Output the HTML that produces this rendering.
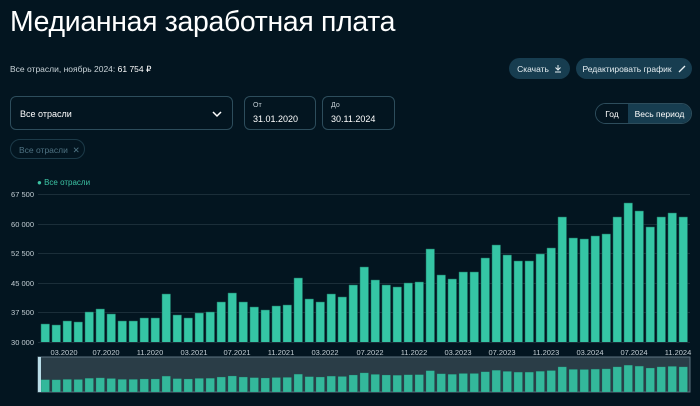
<!DOCTYPE html>
<html><head><meta charset="utf-8"><style>
*{margin:0;padding:0;box-sizing:border-box}
html,body{width:700px;height:406px;overflow:hidden}
body{background:#031520;font-family:"Liberation Sans",sans-serif;color:#fff;position:relative}
.a{position:absolute}
h1{position:absolute;left:10px;top:6px;font-size:28.4px;font-weight:400;letter-spacing:-0.3px}
.sub{left:10px;top:64px;font-size:8.5px;color:#c9d3d8}
.btn{position:absolute;top:58px;height:21px;border-radius:11px;background:#173d50;font-size:8.5px;color:#e6eef2;display:flex;align-items:center;justify-content:center}
.box{position:absolute;border:1px solid #2d4d5c;border-radius:6px}
.lbl{font-size:7px;color:#c3ced4}
.val{font-size:9px;color:#fff}
</style></head><body>
<h1>Медианная заработная плата</h1>
<div class="a sub">Все отрасли, ноябрь 2024: <span style="color:#fff">61 754 ₽</span></div>
<div class="btn" style="left:509px;width:61px">Скачать<svg style="margin-left:5px" width="8" height="9"><path d="M4 1v5M1.5 3.5L4 6l2.5-2.5M1 8h6" stroke="#e6eef2" stroke-width="1" fill="none"/></svg></div>
<div class="btn" style="left:576px;width:116px">Редактировать график<svg style="margin-left:6px" width="8" height="8"><path d="M1 7L7 1" stroke="#e6eef2" stroke-width="1.3"/></svg></div>
<div class="box" style="left:10px;top:96px;width:223px;height:34px"><span class="a val" style="left:9px;top:12px">Все отрасли</span>
<svg class="a" style="left:201px;top:13px" width="10" height="8"><path d="M1 2l4 4 4-4" stroke="#fff" stroke-width="1.5" fill="none"/></svg></div>
<div class="box" style="left:244px;top:96px;width:72px;height:34px"><span class="a lbl" style="left:8px;top:5px">От</span><span class="a val" style="left:8px;top:17px">31.01.2020</span></div>
<div class="box" style="left:322px;top:96px;width:73px;height:34px"><span class="a lbl" style="left:8px;top:5px">До</span><span class="a val" style="left:8px;top:17px">30.11.2024</span></div>
<div class="box" style="left:595px;top:103px;width:97px;height:21px;border-radius:11px;overflow:hidden;display:flex;font-size:8.5px">
<div style="width:32px;display:flex;align-items:center;justify-content:center;background:#031520">Год</div>
<div style="flex:1;display:flex;align-items:center;justify-content:center;background:#173d50">Весь период</div></div>
<div class="box" style="left:10px;top:139px;width:75px;height:20px;border-radius:10px;border-color:#1c3a48;font-size:8.5px;color:#4f7383;padding:5px 0 0 8px">Все отрасли&nbsp;&nbsp;✕</div>
<div class="a" style="left:37px;top:178px;font-size:8px;color:#3cc4a4">● <span>Все отрасли</span></div>
<svg class="a" style="left:0;top:0" width="700" height="406">
<g stroke="#1b2e39" stroke-width="1"><line x1="38" y1="194.5" x2="690" y2="194.5"/><line x1="38" y1="224.5" x2="690" y2="224.5"/><line x1="38" y1="253.5" x2="690" y2="253.5"/><line x1="38" y1="283.5" x2="690" y2="283.5"/><line x1="38" y1="312.5" x2="690" y2="312.5"/><line x1="38" y1="342.5" x2="690" y2="342.5"/></g>
<g font-size="7.5" fill="#c3ced4" text-anchor="end"><text x="34" y="197">67 500</text><text x="34" y="227">60 000</text><text x="34" y="256">52 500</text><text x="34" y="286">45 000</text><text x="34" y="315">37 500</text><text x="34" y="345">30 000</text></g>
<defs><clipPath id="c"><rect x="0" y="0" width="700" height="342"/></clipPath>
<g id="b"><path fill="#35c6a5" stroke="#1c6b5c" stroke-width="0.5" d="
M41 324h8.5v103h-8.5zM52 325h8.5v102h-8.5zM63 321h8.5v106h-8.5zM74 322h8.5v105h-8.5zM85 312h8.5v115h-8.5zM96 309h8.5v118h-8.5zM107 314h8.5v113h-8.5zM118 321h8.5v106h-8.5zM129 321h8.5v106h-8.5zM140 318h8.5v109h-8.5zM151 318h8.5v109h-8.5zM162 294h8.5v133h-8.5z
M173 315h8.5v112h-8.5zM184 318h8.5v109h-8.5zM195 313h8.5v114h-8.5zM206 312h8.5v115h-8.5zM217 302h8.5v125h-8.5zM228 293h8.5v134h-8.5zM239 302h8.5v125h-8.5zM250 307h8.5v120h-8.5zM261 310h8.5v117h-8.5zM272 306h8.5v121h-8.5zM283 305h8.5v122h-8.5zM294 278h8.5v149h-8.5z
M305 299h8.5v128h-8.5zM316 302h8.5v125h-8.5zM327 294h8.5v133h-8.5zM338 297h8.5v130h-8.5zM349 285h8.5v142h-8.5zM360 267h8.5v160h-8.5zM371 280h8.5v147h-8.5zM382 285h8.5v142h-8.5zM393 287h8.5v140h-8.5zM404 283h8.5v144h-8.5zM415 282h8.5v145h-8.5zM426 249h8.5v178h-8.5z
M437 275h8.5v152h-8.5zM448 279h8.5v148h-8.5zM459 272h8.5v155h-8.5zM470 272h8.5v155h-8.5zM481 258h8.5v169h-8.5zM492 245h8.5v182h-8.5zM503 255h8.5v172h-8.5zM514 261h8.5v166h-8.5zM525 261h8.5v166h-8.5zM536 254h8.5v173h-8.5zM547 248h8.5v179h-8.5zM558 217h8.5v210h-8.5z
M569 238h8.5v189h-8.5zM580 239h8.5v188h-8.5zM591 236h8.5v191h-8.5zM602 234h8.5v193h-8.5zM613 217h8.5v210h-8.5zM624 203h8.5v224h-8.5zM635 211h8.5v216h-8.5zM646 227h8.5v200h-8.5zM657 217h8.5v210h-8.5zM668 213h8.5v214h-8.5zM679 217h8.5v210h-8.5z"/></g>
<clipPath id="n"><rect x="38" y="357" width="652" height="35"/></clipPath></defs>
<use href="#b" clip-path="url(#c)"/>
<g font-size="7.5" fill="#c3ced4" text-anchor="middle"><text x="64" y="355">03.2020</text><text x="106" y="355">07.2020</text><text x="150" y="355">11.2020</text><text x="194" y="355">03.2021</text><text x="237" y="355">07.2021</text><text x="281" y="355">11.2021</text><text x="325" y="355">03.2022</text><text x="370" y="355">07.2022</text><text x="414" y="355">11.2022</text><text x="458" y="355">03.2023</text><text x="502" y="355">07.2023</text><text x="546" y="355">11.2023</text><text x="590" y="355">03.2024</text><text x="634" y="355">07.2024</text><text x="678" y="355">11.2024</text></g>
<rect x="38" y="357" width="652" height="35" fill="#2a3d47" stroke="#5d7480" stroke-width="1"/>
<g clip-path="url(#n)"><use href="#b" transform="translate(0,340.8) scale(1,0.12)" opacity="0.9"/></g>
<rect x="38" y="357" width="3" height="35" fill="#b9dde8"/>
</svg>
</body></html>
